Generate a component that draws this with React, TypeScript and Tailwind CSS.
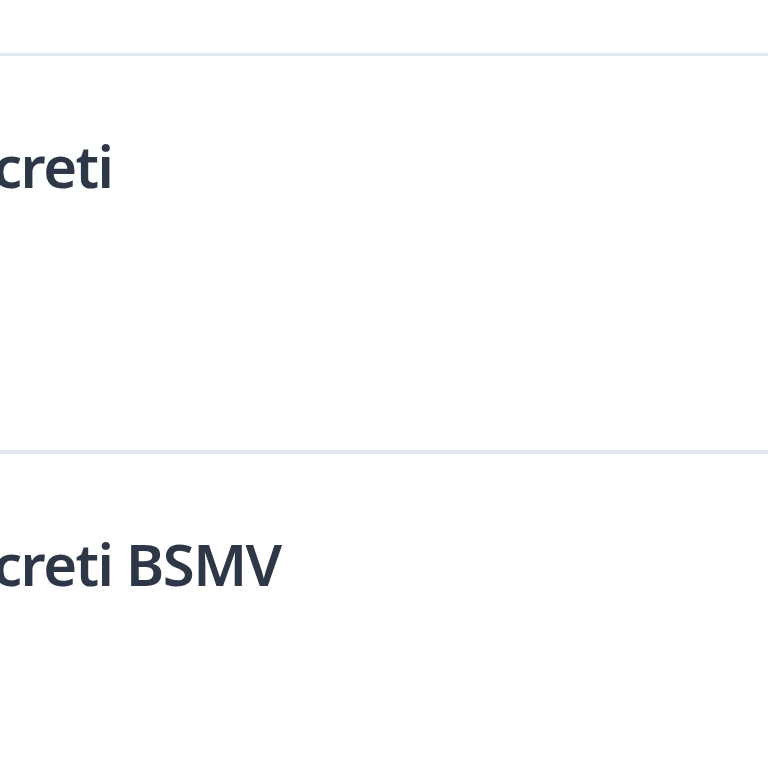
export default function App() {
  const font = { fontFamily: '"Noto Sans", "Open Sans", sans-serif' };
  return (
    <div className="w-[768px] h-[768px] overflow-hidden bg-white" style={font}>
      <div className="h-[53px] bg-white" />
      <div className="h-[397px] border-t-[3px] border-[#e3e8ee] bg-[#feffff] pt-[75px]">
        <div className="-ml-[7px] text-[58px] leading-[70px] font-semibold tracking-[-1.5px] text-[#2d3748] whitespace-nowrap">
          creti
        </div>
      </div>
      <div className="h-[397px] border-t-[4px] border-[#e5e9ef] bg-white pt-[75px]">
        <div className="-ml-[7px] text-[58px] leading-[70px] font-semibold tracking-[-1.5px] text-[#2d3748] whitespace-nowrap">
          creti BSMV
        </div>
      </div>
    </div>
  );
}
